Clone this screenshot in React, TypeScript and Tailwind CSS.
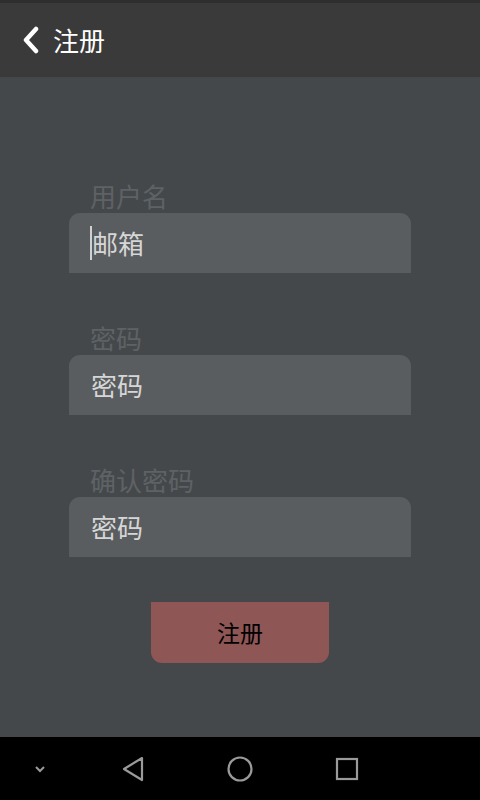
import React from 'react'

const FONT = '"Noto Sans CJK SC", "Liberation Sans", sans-serif'

function Field({ label, value, cursor }: { label: string; value: string; cursor?: boolean }) {
  return (
    <div className="flex flex-col">
      <div className="pl-[21px] text-[26px] leading-[26px] text-[#5e6265]">{label}</div>
      <div className="mt-[4px] h-[60px] w-[342px] rounded-t-[11px] bg-[#5a5d5f] flex items-center pl-[22px]">
        {cursor && <span className="w-[2px] h-[34px] bg-[#d0d0d0] -ml-[1px]" />}
        <span className="text-[26px] leading-[26px] text-[#d6d6d6]">{value}</span>
      </div>
    </div>
  )
}

export default function App() {
  return (
    <div className="w-[480px] h-[800px] flex flex-col bg-[#45484b]" style={{ fontFamily: FONT }}>
      {/* title bar */}
      <div className="h-[77px] bg-[#3a3a3a] border-t-[3px] border-[#2e2e2e] flex items-center pl-[22px]">
        <svg width="18" height="28" viewBox="0 0 18 28" className="mr-[13px]">
          <path d="M14 3 L4 14 L14 25" fill="none" stroke="#ffffff" strokeWidth="4.5" strokeLinecap="round" strokeLinejoin="round" />
        </svg>
        <span className="text-[26px] leading-[26px] text-white">注册</span>
      </div>

      {/* form */}
      <div className="flex-1 flex flex-col items-center pt-[106px]">
        <div className="flex flex-col gap-[52px]">
          <Field label="用户名" value="邮箱" cursor />
          <Field label="密码" value="密码" />
          <Field label="确认密码" value="密码" />
        </div>
        <button className="mt-[45px] w-[178px] h-[61px] rounded-b-[11px] bg-[#8f5656] text-[23px] leading-[23px] text-black">
          注册
        </button>
      </div>

      {/* system navigation */}
      <div className="h-[63px] bg-black flex items-center">
        <div className="w-[80px] flex justify-center">
          <svg width="14" height="10" viewBox="0 0 14 10">
            <path d="M3 3 L7 7 L11 3" fill="none" stroke="#9a9a9a" strokeWidth="2" />
          </svg>
        </div>
        <div className="w-[106px] flex justify-center">
          <svg width="26" height="28" viewBox="0 0 26 28">
            <path d="M22 3 L4 14 L22 25 Z" fill="none" stroke="#9a9a9a" strokeWidth="2.2" strokeLinejoin="round" />
          </svg>
        </div>
        <div className="w-[108px] flex justify-center">
          <svg width="28" height="28" viewBox="0 0 28 28">
            <circle cx="14" cy="14" r="11.5" fill="none" stroke="#9a9a9a" strokeWidth="2.2" />
          </svg>
        </div>
        <div className="w-[106px] flex justify-center">
          <svg width="26" height="26" viewBox="0 0 26 26">
            <rect x="3" y="3" width="20" height="20" fill="none" stroke="#9a9a9a" strokeWidth="2.2" />
          </svg>
        </div>
      </div>
    </div>
  )
}
